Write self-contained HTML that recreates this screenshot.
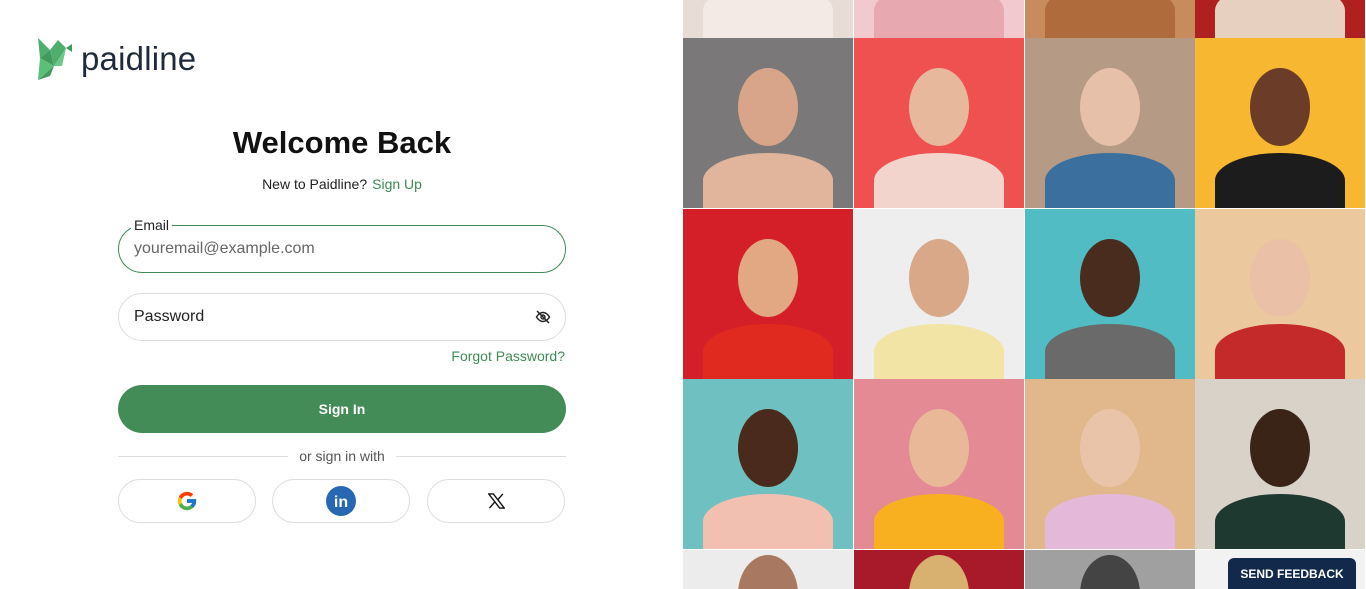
<!DOCTYPE html>
<html style="overflow:hidden;width:1366px;height:589px"><head><meta charset="utf-8"><style>
*{box-sizing:border-box;margin:0;padding:0}
body{width:1366px;height:589px;overflow:hidden;background:#fff;font-family:"Liberation Sans",Arial,sans-serif;position:relative}
.logo{position:absolute;left:35px;top:36px;display:flex;align-items:center}
.logo span{font-size:33px;color:#1f2a3c;margin-left:6px;letter-spacing:.2px}
h1{position:absolute;left:118px;width:448px;top:125px;text-align:center;font-size:31px;font-weight:bold;color:#111}
.sub{position:absolute;left:118px;width:448px;top:176px;text-align:center;font-size:14px;color:#222}
.sub a{color:#3e8b57;margin-left:5px}
.field{position:absolute;left:118px;width:448px;height:48px;border:1px solid #ddd;border-radius:24px;font-size:16px;padding:0 15px;display:flex;align-items:center}
.f1{top:225px;border-color:#3e8b57;color:#666}
.f1 label{position:absolute;top:-9px;left:12px;background:#fff;padding:0 3px;font-size:14px;color:#222}
.f2{top:293px;color:#222}
.forgot{position:absolute;right:801px;top:348px;font-size:14px;color:#3e8b57}
.btn{position:absolute;left:118px;top:385px;width:448px;height:48px;border-radius:24px;background:#438b57;color:#fff;font-weight:bold;font-size:14px;display:flex;align-items:center;justify-content:center}
.or{position:absolute;left:118px;width:448px;top:448px;font-size:14px;color:#555;text-align:center}
.or:before,.or:after{content:"";position:absolute;top:8px;height:1px;background:#ddd;width:170px}
.or:before{left:0}.or:after{right:0}
.soc{position:absolute;top:479px;width:138px;height:44px;border:1px solid #ddd;border-radius:22px;display:flex;align-items:center;justify-content:center}
.grid{position:absolute;left:683px;top:0;width:683px;height:589px;overflow:hidden}
.c{position:absolute;width:170px;height:170px;overflow:hidden}
.c .h{position:absolute;left:55px;top:30px;width:60px;height:78px;border-radius:50%}
.c .b{position:absolute;left:20px;top:115px;width:130px;height:55px;border-radius:50% 50% 0 0}
.fb{position:absolute;left:1228px;top:558px;width:128px;height:31px;background:#13294b;color:#fff;font-size:12px;font-weight:bold;border-radius:6px 6px 0 0;display:flex;align-items:center;justify-content:center}
</style></head><body>
<div class="logo"><svg width="40" height="46" viewBox="0 0 38 46"><polygon points="2,2 14,14 4,22" fill="#4fae6c"/><polygon points="14,14 4,22 18,30" fill="#3f9a5c"/><polygon points="4,22 18,30 2,44" fill="#5cbf78"/><polygon points="14,14 22,4 30,12 18,30" fill="#4fae6c"/><polygon points="30,12 36,8 36,16" fill="#3f9a5c"/><polygon points="18,30 30,12 26,30" fill="#6cc888"/><polygon points="2,44 18,30 14,40" fill="#3f9a5c"/></svg><span>paidline</span></div>
<h1>Welcome Back</h1>
<div class="sub">New to Paidline?<a>Sign Up</a></div>
<div class="field f1"><label>Email</label>youremail@example.com</div>
<div class="field f2">Password<svg style="position:absolute;right:14px" width="16" height="16" viewBox="0 0 16 16" fill="none" stroke="#222" stroke-width="1.4"><path d="M1.5 8s2.5-4.5 6.5-4.5S14.5 8 14.5 8 12 12.5 8 12.5 1.5 8 1.5 8z"/><circle cx="8" cy="8" r="2"/><path d="M2 2l12 12"/></svg></div>
<div class="forgot">Forgot Password?</div>
<div class="btn">Sign In</div>
<div class="or">or sign in with</div>
<div class="soc" style="left:118px"><svg width="22" height="22" viewBox="0 0 48 48"><path fill="#FFC107" d="M43.6 20H24v8h11.3C33.7 32.7 29.3 36 24 36c-6.6 0-12-5.4-12-12s5.4-12 12-12c3 0 5.8 1.1 7.9 3l5.7-5.7C34 6.1 29.3 4 24 4 13 4 4 13 4 24s9 20 20 20 20-9 20-20c0-1.3-.1-2.7-.4-4z"/><path fill="#FF3D00" d="M6.3 14.7l6.6 4.8C14.7 15.1 19 12 24 12c3 0 5.8 1.1 7.9 3l5.7-5.7C34 6.1 29.3 4 24 4 16.3 4 9.700 8.3 6.3 14.7z"/><path fill="#4CAF50" d="M24 44c5.2 0 9.9-2 13.4-5.2l-6.2-5.2C29.2 35.1 26.7 36 24 36c-5.2 0-9.6-3.3-11.3-8l-6.5 5C9.5 39.6 16.2 44 24 44z"/><path fill="#1976D2" d="M43.6 20H24v8h11.3c-.8 2.2-2.2 4.2-4.1 5.6l6.2 5.2C37 39.2 44 34 44 24c0-1.3-.1-2.7-.4-4z"/></svg></div>
<div class="soc" style="left:272px"><svg width="30" height="30" viewBox="0 0 30 30"><circle cx="15" cy="15" r="15" fill="#2867b2"/><text x="15" y="21" text-anchor="middle" font-family="Liberation Sans" font-weight="bold" font-size="16" fill="#fff">in</text></svg></div>
<div class="soc" style="left:427px"><svg width="17" height="16" viewBox="0 0 24 22"><path d="M1 1h6.5l15.5 20h-6.5z" fill="none" stroke="#111" stroke-width="2"/><path d="M2 21L10 12M14 9l7-8" stroke="#111" stroke-width="2"/></svg></div>
<div class="grid">
<div class="c" style="left:0;top:-132px;background:#e8ddd6"><div class="b" style="background:#f3eae6"></div></div>
<div class="c" style="left:171px;top:-132px;background:#f1c9cf"><div class="b" style="background:#e8a8b0"></div></div>
<div class="c" style="left:342px;top:-132px;background:#c78b5c"><div class="b" style="background:#b06b3c"></div></div>
<div class="c" style="left:512px;top:-132px;background:#b02020"><div class="b" style="background:#e8d0c0"></div></div>

<div class="c" style="left:0;top:38px;background:#7a7878"><div class="h" style="background:#d9a58a"></div><div class="b" style="background:#e0b59c"></div></div>
<div class="c" style="left:171px;top:38px;background:#ef5150"><div class="h" style="background:#e8b89c"></div><div class="b" style="background:#f2d4cc"></div></div>
<div class="c" style="left:342px;top:38px;background:#b59a86"><div class="h" style="background:#e6c0a8"></div><div class="b" style="background:#3a6f9e"></div></div>
<div class="c" style="left:512px;top:38px;background:#f7b731"><div class="h" style="background:#6b3d28"></div><div class="b" style="background:#1c1c1c"></div></div>

<div class="c" style="left:0;top:209px;background:#d41f28"><div class="h" style="background:#e2a884"></div><div class="b" style="background:#e02a20"></div></div>
<div class="c" style="left:171px;top:209px;background:#eeeeee"><div class="h" style="background:#d8a888"></div><div class="b" style="background:#f2e4a4"></div></div>
<div class="c" style="left:342px;top:209px;background:#52bcc4"><div class="h" style="background:#4a2c1e"></div><div class="b" style="background:#6a6a6a"></div></div>
<div class="c" style="left:512px;top:209px;background:#ecc89e"><div class="h" style="background:#eac0a6"></div><div class="b" style="background:#c42a2a"></div></div>

<div class="c" style="left:0;top:379px;background:#6fc0c0"><div class="h" style="background:#4a2a1c"></div><div class="b" style="background:#f2c0b0"></div></div>
<div class="c" style="left:171px;top:379px;background:#e48a94"><div class="h" style="background:#e8b898"></div><div class="b" style="background:#f8b020"></div></div>
<div class="c" style="left:342px;top:379px;background:#e0b88c"><div class="h" style="background:#eac4a8"></div><div class="b" style="background:#e4b8d8"></div></div>
<div class="c" style="left:512px;top:379px;background:#d8d2c8"><div class="h" style="background:#3a2418"></div><div class="b" style="background:#1e3a30"></div></div>

<div class="c" style="left:0;top:550px;height:39px;background:#ececec"><div class="h" style="background:#a87860;top:5px"></div></div>
<div class="c" style="left:171px;top:550px;height:39px;background:#a81a2a"><div class="h" style="background:#d8b070;top:5px"></div></div>
<div class="c" style="left:342px;top:550px;height:39px;background:#a0a0a0"><div class="h" style="background:#444;top:5px"></div></div>
<div class="c" style="left:512px;top:550px;height:39px;background:#f2f2f2"></div>
</div>
<div class="fb">SEND FEEDBACK</div>
</body></html>
